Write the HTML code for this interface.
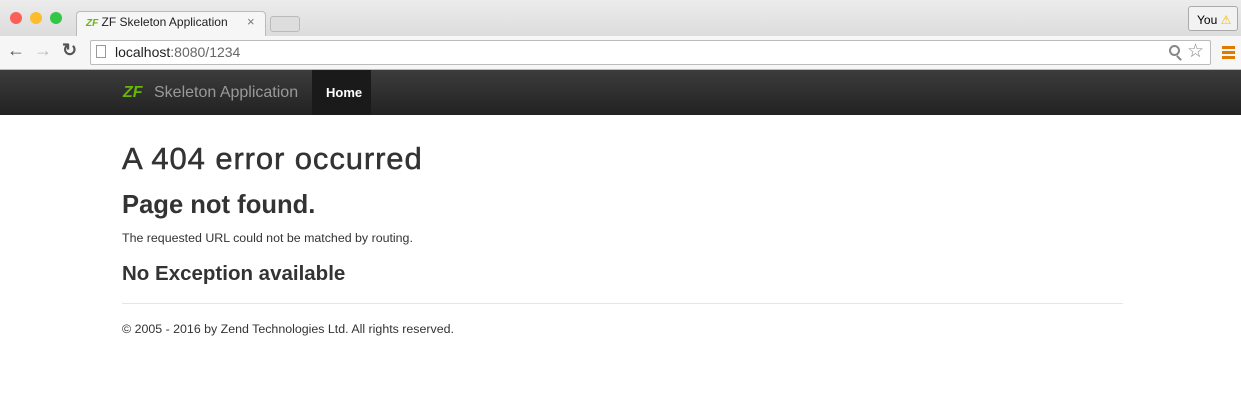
<!DOCTYPE html>
<html><head><meta charset="utf-8"><style>
*{margin:0;padding:0;box-sizing:border-box}
body{width:1241px;height:409px;overflow:hidden;background:#fff;font-family:"Liberation Sans",sans-serif;position:relative}
.abs{position:absolute}
</style></head><body>
<div class="abs" style="left:0;top:0;width:1241px;height:36px;background:linear-gradient(#ececec,#dcdcdc)"></div>
<div class="abs" style="left:10px;top:12px;width:12px;height:12px;border-radius:50%;background:#fc5f57"></div>
<div class="abs" style="left:30px;top:12px;width:12px;height:12px;border-radius:50%;background:#fdbc2e"></div>
<div class="abs" style="left:50px;top:12px;width:12px;height:12px;border-radius:50%;background:#33c748"></div>
<div class="abs" style="left:76px;top:11px;width:190px;height:26px;background:#f6f6f6;border:1px solid #bbb;border-bottom:none;border-radius:4px 4px 0 0"></div>
<div class="abs" style="left:86px;top:15px;font-size:12px;color:#222"><span style="color:#68b604;font-weight:bold;font-style:italic;font-size:10px">ZF</span> ZF Skeleton Application</div>
<div class="abs" style="left:247px;top:14px;font-size:13px;color:#777">×</div>
<div class="abs" style="left:270px;top:16px;width:30px;height:16px;background:#ddd;border:1px solid #bbb;border-radius:3px"></div>
<div class="abs" style="left:1188px;top:6px;width:50px;height:25px;border:1px solid #aaa;border-radius:3px;background:#f2f2f2;font-size:12px;padding:6px 0 0 8px">You <span style="color:#f5b800">⚠</span></div>
<div class="abs" style="left:0;top:36px;width:1241px;height:34px;background:#f6f6f6;border-bottom:1px solid #bbb"></div>
<div class="abs" style="left:7px;top:40px;font-size:18px;color:#555;font-weight:bold">←</div>
<div class="abs" style="left:34px;top:40px;font-size:18px;color:#bbb;font-weight:bold">→</div>
<div class="abs" style="left:62px;top:40px;font-size:18px;color:#555;font-weight:bold">↻</div>
<div class="abs" style="left:90px;top:40px;width:1121px;height:25px;background:#fff;border:1px solid #bbb;border-radius:2px"></div>
<div class="abs" style="left:96px;top:45px;width:10px;height:13px;border:1px solid #999"></div>
<div class="abs" style="left:115px;top:44px;font-size:14px;color:#222">localhost<span style="color:#666">:8080/1234</span></div>
<div class="abs" style="left:1169px;top:45px;width:11px;height:11px;border:2px solid #888;border-radius:50%"></div>
<div class="abs" style="left:1178px;top:55px;width:2px;height:6px;background:#888;transform:rotate(-45deg)"></div>
<div class="abs" style="left:1187px;top:40px;font-size:19px;color:#888">☆</div>
<div class="abs" style="left:1222px;top:46px;width:13px;height:3px;background:#e07b00;box-shadow:0 5px 0 #e07b00,0 10px 0 #e07b00"></div>
<div class="abs" style="left:0;top:70px;width:1241px;height:45px;background:linear-gradient(#3c3c3c,#222)"></div>
<div class="abs" style="left:123px;top:84px;font-size:16px;color:#68b604;font-weight:bold;font-style:italic">ZF</div>
<div class="abs" style="left:154px;top:84px;font-size:16px;color:#999">Skeleton Application</div>
<div class="abs" style="left:312px;top:70px;width:59px;height:45px;background:#1a1a1a"></div>
<div class="abs" style="left:326px;top:85px;font-size:13px;color:#fff;font-weight:bold">Home</div>
<div class="abs" style="left:122px;top:141px;font-size:31px;color:#333;letter-spacing:0.9px;-webkit-text-stroke:0.5px #333">A 404 error occurred</div>
<div class="abs" style="left:122px;top:191px;font-size:25.6px;color:#333;font-weight:bold">Page not found.</div>
<div class="abs" style="left:122px;top:231px;font-size:12.4px;color:#333">The requested URL could not be matched by routing.</div>
<div class="abs" style="left:122px;top:262px;font-size:20.5px;color:#333;font-weight:bold">No Exception available</div>
<div class="abs" style="left:122px;top:303px;width:1001px;height:1px;background:#e6e6e6"></div>
<div class="abs" style="left:122px;top:322px;font-size:12.4px;color:#333">© 2005 - 2016 by Zend Technologies Ltd. All rights reserved.</div>
</body></html>
